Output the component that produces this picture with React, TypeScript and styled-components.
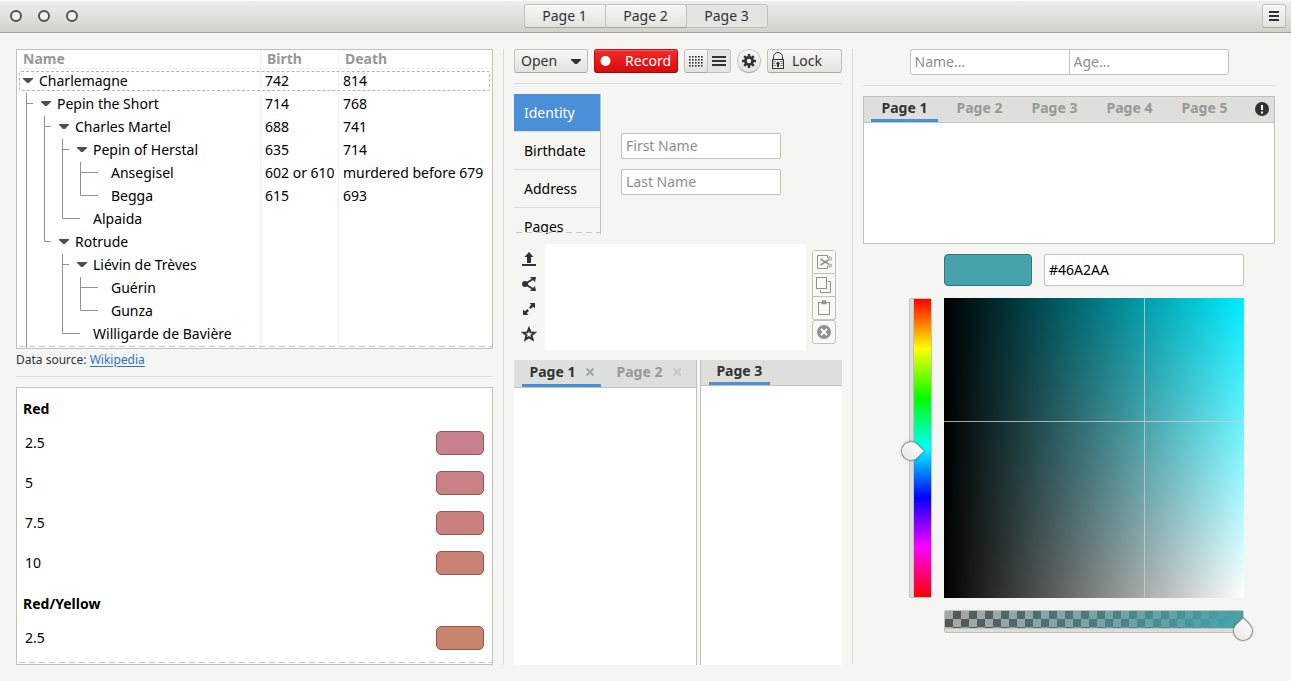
import React from 'react';
import styled, { createGlobalStyle, css } from 'styled-components';

const c = {
  bg: '#f5f5f3',
  base: '#ffffff',
  border: '#c2c2bd',
  line: '#dcdcda',
  text: '#000000',
  fg: '#2e3436',
  dim: '#959999',
  accent: '#4a90d9',
  tabbar: '#dededa',
};

const GlobalStyle = createGlobalStyle`
  *, *::before, *::after { box-sizing: border-box; }
  body {
    margin: 0;
    background: ${c.bg};
    color: ${c.text};
    font-family: "Noto Sans", "Open Sans", sans-serif;
    font-size: 14px;
    line-height: 20px;
  }
  button, input { font: inherit; color: inherit; margin: 0; }
  svg { display: block; flex: none; }
`;

const Window = styled.div`
  display: flex;
  flex-direction: column;
  min-height: 100vh;
`;

const HeaderBar = styled.header`
  display: grid;
  grid-template-columns: 1fr auto 1fr;
  align-items: center;
  height: 33px;
  padding: 0 5px 1px;
  border-bottom: 1px solid #a1a197;
  background: linear-gradient(#efefee, #d2d2cc);
  box-shadow: inset 0 1px #fbfbfb;
`;

const WindowControls = styled.div`
  display: flex;
  gap: 14px;
  padding-left: 4px;
`;

const WindowControl = styled.button`
  width: 14px;
  height: 14px;
  padding: 0;
  border: 0;
  background: none;
`;

const raised = css`
  border: 1px solid ${c.border};
  border-bottom-color: #a9a9a3;
  border-radius: 3px;
  background: linear-gradient(#f7f7f6, #e2e2df);
  color: ${c.fg};
  box-shadow: inset 0 1px #ffffff;
`;

const Linked = styled.div`
  display: flex;
  > * { border-radius: 0; }
  > * + * { margin-left: -1px; }
  > :first-child { border-radius: 3px 0 0 3px; }
  > :last-child { border-radius: 0 3px 3px 0; }
`;

const Button = styled.button<{ $pressed?: boolean }>`
  ${raised}
  display: flex;
  align-items: center;
  justify-content: center;
  height: 24px;
  padding: 0 6px;
  white-space: nowrap;
  ${p => p.$pressed && css`
    background: #e4e4e3;
    border-bottom-color: ${c.border};
    box-shadow: none;
  `}
`;

const SwitcherButton = styled(Button)`
  min-width: 82px;
`;

const IconButton = styled(Button)<{ $round?: boolean }>`
  width: 24px;
  padding: 0;
  ${p => p.$round && css`border-radius: 50%;`}
`;

const HeaderEnd = styled.div`
  display: flex;
  justify-content: flex-end;
`;

const Main = styled.main`
  flex: 1;
  display: grid;
  grid-template-columns: minmax(0, 477fr) 1px minmax(328px, 328fr) 1px minmax(370px, 412fr);
  gap: 10px;
  padding: 16px;
`;

const Column = styled.section`
  display: flex;
  flex-direction: column;
  gap: 10px;
  min-width: 0;
`;

const Divider = styled.div`
  background: ${c.line};
  min-height: 1px;
`;

const ScrollFrame = styled.div<{ $height?: number }>`
  position: relative;
  overflow: hidden;
  border: 1px solid ${c.border};
  background: ${c.base};
  ${p => (p.$height ? css`height: ${p.$height}px;` : css`flex: 1 1 0; min-height: 278px;`)}
`;

const Undershoot = styled.div`
  position: absolute;
  left: 2px;
  right: 0;
  bottom: 1px;
  height: 1px;
  background: repeating-linear-gradient(to right, #c6c6c3 0 6px, transparent 6px 10px);
`;

/* Family tree */

const Tree = styled.table`
  width: 100%;
  table-layout: fixed;
  border-collapse: separate;
  border-spacing: 0;
  th {
    height: 19px;
    padding: 0 6px;
    line-height: 18px;
    text-align: left;
    color: ${c.dim};
    border-bottom: 1px solid #f0f0ef;
  }
  td {
    height: 23px;
    padding: 0 4px;
    line-height: 23px;
    white-space: nowrap;
  }
  td:first-child { padding: 0 0 0 1px; }
  th:not(:last-child), td:not(:last-child) { border-right: 1px solid #f0f0ef; }
`;

const NarrowCol = styled.col<{ $width: number }>`
  width: ${p => p.$width}px;
`;

const NameCell = styled.div`
  display: flex;
  height: 23px;
`;

const Name = styled.span`
  padding-left: 3px;
`;

const FocusRing = styled.div`
  position: absolute;
  top: 21px;
  left: 2px;
  right: 2px;
  height: 20px;
  border: 1px dashed #b4b4b4;
  border-radius: 2px;
`;

type Guide = 'pass' | 'tee' | 'end' | 'blank';
type Person = { name: string; birth?: string; death?: string; guides: Guide[]; leaf?: boolean };

const people: Person[] = [
  { name: 'Charlemagne', birth: '742', death: '814', guides: [] },
  { name: 'Pepin the Short', birth: '714', death: '768', guides: ['tee'] },
  { name: 'Charles Martel', birth: '688', death: '741', guides: ['pass', 'tee'] },
  { name: 'Pepin of Herstal', birth: '635', death: '714', guides: ['pass', 'pass', 'tee'] },
  { name: 'Ansegisel', birth: '602 or 610', death: 'murdered before 679', guides: ['pass', 'pass', 'pass', 'tee'], leaf: true },
  { name: 'Begga', birth: '615', death: '693', guides: ['pass', 'pass', 'pass', 'end'], leaf: true },
  { name: 'Alpaida', guides: ['pass', 'pass', 'end'], leaf: true },
  { name: 'Rotrude', guides: ['pass', 'end'] },
  { name: 'Liévin de Trèves', guides: ['pass', 'blank', 'tee'] },
  { name: 'Guérin', guides: ['pass', 'blank', 'pass', 'tee'], leaf: true },
  { name: 'Gunza', guides: ['pass', 'blank', 'pass', 'end'], leaf: true },
  { name: 'Willigarde de Bavière', guides: ['pass', 'blank', 'end'], leaf: true },
  { name: '', guides: ['pass'], leaf: true },
];

const GuideSvg = styled.svg`
  overflow: visible;
`;

function GuideLine({ kind, leaf }: { kind: Guide; leaf?: boolean }) {
  const arm = leaf ? 26 : 15;
  const d: Record<Guide, string> = {
    pass: 'M8.5 0V23',
    tee: `M8.5 1V23M8.5 11.5H${arm}`,
    end: `M8.5 0V11.5H${arm}`,
    blank: '',
  };
  return (
    <GuideSvg width="18" height="23" aria-hidden="true">
      <path d={d[kind]} fill="none" stroke="#8f9292" />
    </GuideSvg>
  );
}

function Expander({ hidden }: { hidden?: boolean }) {
  return (
    <svg width="18" height="23" aria-hidden="true">
      {!hidden && <path d="M5 9H15V10L10.8 14H9.200L5 10Z" fill="#4c4f50" />}
    </svg>
  );
}

const Caption = styled.p`
  margin: -10px 0 -4px;
  font-size: 12px;
  line-height: 21px;
  color: ${c.fg};
`;

const Link = styled.a`
  color: #2a76c6;
  text-decoration: underline;
  text-underline-offset: 2px;
`;

/* Colour list */

const GroupTitle = styled.h2`
  margin: 0;
  padding: 11px 6px 4px;
  font-size: 14px;
  line-height: 20px;
`;

const SwatchRow = styled.div`
  display: flex;
  align-items: center;
  justify-content: space-between;
  height: 40px;
  padding: 0 8px;
`;

const Swatch = styled.button<{ $color: string; $edge: string; $large?: boolean }>`
  width: ${p => (p.$large ? 88 : 48)}px;
  height: ${p => (p.$large ? 32 : 24)}px;
  padding: 0;
  border: 1px solid ${p => p.$edge};
  border-radius: ${p => (p.$large ? 4 : 5)}px;
  background: ${p => p.$color};
`;

const reds = [
  ['2.5', '#c8818c', '#8a5961'],
  ['5', '#c98185', '#8b595c'],
  ['7.5', '#c9817f', '#8b5958'],
  ['10', '#c98174', '#8b5950'],
];

/* Toolbar */

const Toolbar = styled.div`
  display: flex;
  gap: 6px;
`;

const OpenButton = styled(Button)`
  width: 74px;
  justify-content: space-between;
`;

const RecordButton = styled(Button)`
  width: 84px;
  justify-content: space-between;
  padding: 0 6px 0 5px;
  border-color: #b50e0e;
  border-bottom-color: #940b0b;
  background: linear-gradient(#f32a2a, #d90b0b);
  box-shadow: inset 0 1px #f65f5f;
  color: #ffffff;
`;

const LockButton = styled(Button)`
  flex: 1;
  justify-content: flex-start;
  gap: 7px;
  padding: 0 3px;
`;

/* Stack with sidebar */

const Stack = styled.div`
  display: flex;
  height: 140px;
`;

const Sidebar = styled.nav`
  position: relative;
  width: 87px;
  overflow: hidden;
  border-right: 1px solid ${c.border};
`;

const SidebarItem = styled.button<{ $selected?: boolean }>`
  display: block;
  width: 100%;
  height: 38px;
  padding: 0 10px;
  border: 0;
  border-bottom: 1px solid ${c.line};
  background: ${p => (p.$selected ? c.accent : 'transparent')};
  background-clip: padding-box;
  color: ${p => (p.$selected ? '#ffffff' : c.text)};
  text-align: left;
`;

const StackPage = styled.div`
  display: flex;
  flex-direction: column;
  justify-content: center;
  gap: 10px;
  padding-left: 20px;
`;

const Entry = styled.input<{ $tall?: boolean }>`
  width: ${p => (p.$tall ? 200 : 160)}px;
  height: ${p => (p.$tall ? 32 : 26)}px;
  padding: 0 4px 2px;
  border: 1px solid ${c.border};
  border-radius: 2px;
  background: ${c.base};
  outline: 0;
  &::placeholder { color: #8b8e8f; opacity: 1; }
`;

const CenteredLinked = styled(Linked)`
  justify-content: center;
`;

const LinkedEntry = styled(Entry)`
  min-width: 0;
`;

/* Text area with side tools */

const Workbench = styled.div`
  display: flex;
  height: 106px;
`;

const PlainTools = styled.div`
  display: flex;
  flex-direction: column;
  justify-content: space-around;
  width: 31px;
  padding: 2px 1px 4px 0;
`;

const PlainTool = styled.button`
  display: flex;
  align-items: center;
  justify-content: center;
  height: 25px;
  padding: 0;
  border: 0;
  background: none;
  color: ${c.fg};
`;

const TextArea = styled.textarea`
  flex: 1;
  min-width: 0;
  border: 0;
  padding: 4px;
  resize: none;
  outline: 0;
  background: ${c.base};
`;

const EditTools = styled.div`
  display: flex;
  flex-direction: column;
  padding: 6px;
`;

const EditTool = styled.button<{ $first?: boolean; $last?: boolean; $joined?: boolean }>`
  display: flex;
  align-items: center;
  justify-content: center;
  width: 24px;
  height: ${p => (p.$joined ? 23 : 24)}px;
  padding: 0;
  border: 1px solid ${c.border};
  ${p => p.$joined && css`border-top: 0;`}
  border-radius: ${p => `${p.$first ? '3px 3px' : '0 0'} ${p.$last ? '3px 3px' : '0 0'}`};
  background: #f8f8f7;
`;

/* Notebooks */

const Paned = styled.div`
  flex: 1;
  display: flex;
  gap: 3px;
`;

const Pane = styled.div<{ $grow: number; $side: 'left' | 'right' }>`
  flex: ${p => p.$grow} 1 0;
  display: flex;
  flex-direction: column;
  min-width: 0;
  min-height: 120px;
  background: ${c.base};
  ${p => (p.$side === 'left' ? 'border-right' : 'border-left')}: 1px solid ${c.border};
`;

const Notebook = styled.div`
  height: 148px;
  border: 1px solid ${c.border};
  background: ${c.base};
`;

const TabBar = styled.div<{ $tall?: boolean }>`
  display: flex;
  height: ${p => (p.$tall ? 28 : 26)}px;
  padding: 0 7px;
  border-bottom: 1px solid ${c.border};
  background: ${c.tabbar};
`;

const PaneTabBar = styled(TabBar)`
  padding: 0 8px;
`;

const Tab = styled.div<{ $active?: boolean; $wide?: boolean }>`
  display: flex;
  align-items: center;
  gap: 8px;
  margin-right: 8px;
  padding: 0 ${p => (p.$wide ? 9 : 6)}px;
  border-bottom: 3px solid ${p => (p.$active ? c.accent : 'transparent')};
`;

const TabLabel = styled.button<{ $active?: boolean }>`
  min-width: 49px;
  padding: 0;
  border: 0;
  background: none;
  font-weight: 700;
  white-space: nowrap;
  color: ${p => (p.$active ? c.fg : c.dim)};
`;

const CloseButton = styled.button<{ $faint?: boolean }>`
  padding: 0;
  border: 0;
  background: none;
  color: ${p => (p.$faint ? '#c3c5c3' : '#a3a5a4')};
`;

const TabEnd = styled.div`
  display: flex;
  align-items: center;
  margin-left: auto;
  margin-right: -3px;
  padding-bottom: 1px;
`;

/* Colour editor */

const Editor = styled.div`
  align-self: center;
  display: grid;
  grid-template-columns: 23px 300px;
  gap: 12px;
  width: 350px;
  justify-content: end;
`;

const EditorTop = styled.div`
  grid-column: 2;
  display: flex;
  justify-content: space-between;
`;

const HueScale = styled.div`
  position: relative;
  border: 1px solid ${c.border};
  border-radius: 2px;
  background: ${c.line};
  padding-left: 3px;
  display: flex;
`;

const HueRamp = styled.div`
  flex: 1;
  border-left: 1px solid ${c.border};
  background: linear-gradient(#f00, #ff0, #0f0, #0ff, #00f, #f0f, #f00);
`;

const Plane = styled.div`
  position: relative;
  height: 300px;
  background:
    linear-gradient(to right, #000, transparent),
    linear-gradient(#00ebff, #fff);
`;

const CrossX = styled.div`
  position: absolute;
  left: 200px;
  top: 0;
  bottom: 0;
  width: 1px;
  background: rgba(205, 205, 205, 0.8);
`;

const CrossY = styled.div`
  position: absolute;
  top: 123px;
  left: 0;
  right: 0;
  height: 1px;
  background: rgba(205, 205, 205, 0.8);
`;

const AlphaScale = styled.div`
  position: relative;
  grid-column: 2;
  height: 23px;
  padding-bottom: 3px;
  border: 1px solid ${c.border};
  border-radius: 2px;
  background: ${c.line};
  display: flex;
`;

const AlphaRamp = styled.div`
  flex: 1;
  border-bottom: 1px solid ${c.border};
  background:
    linear-gradient(to right, transparent, #46a2aa),
    repeating-conic-gradient(#555 0 25%, #a8a8a8 0 50%) 0 0 / 16px 16px;
`;

const thumb = css`
  appearance: none;
  width: 20px;
  height: 20px;
  border: 1px solid #8f918d;
  background: linear-gradient(#fbfbfb, #e8e8e7);
  box-shadow: inset 0 0 0 1px #f8f8f8, 0 0 2px rgba(0, 0, 0, 0.3);
  transform: rotate(45deg);
`;

const range = css`
  appearance: none;
  position: absolute;
  padding: 0;
  background: none;
  outline: 0;
`;

const HueRange = styled.input`
  ${range}
  writing-mode: vertical-lr;
  left: -9px;
  top: -11px;
  width: 20px;
  height: 320px;
  &::-webkit-slider-thumb { ${thumb} border-radius: 50% 0 50% 50%; }
`;

const AlphaRange = styled.input`
  ${range}
  left: -12px;
  top: 10px;
  width: 320px;
  height: 20px;
  &::-webkit-slider-thumb { ${thumb} border-radius: 0 50% 50% 50%; }
`;

/* Icons */

const Svg = ({ size = 16, children }: { size?: number; children: React.ReactNode }) => (
  <svg width={size} height={size} viewBox={`0 0 ${size} ${size}`} aria-hidden="true" fill="currentColor">
    {children}
  </svg>
);

const MenuIcon = () => <Svg><path d="M3 3h10v2H3zM3 7h10v2H3zM3 11h10v2H3z" /></Svg>;
const ListIcon = () => <Svg><path d="M1 3h14v2H1zM1 7h14v2H1zM1 11h14v2H1z" /></Svg>;
const GridIcon = () => (
  <Svg>
    {[3, 6, 9, 12].map(y => [1, 4, 7, 10, 13].map(x => (
      <rect key={`${x}-${y}`} x={x} y={y} width="1.600" height="1.600" />
    )))}
  </Svg>
);
const ArrowDown = () => <Svg size={10}><path d="M0 3h10v1L6 8H4L0 4z" /></Svg>;
const Dot = () => <Svg size={11}><circle cx="5.500" cy="5" r="5" /></Svg>;
const GearIcon = () => (
  <Svg>
    <g stroke="currentColor" strokeWidth="2.400">
      <path d="M8 1v14M1 8h14M3.200 3.200l9.600 9.600M12.800 3.200L3.200 12.800" />
    </g>
    <circle cx="8" cy="8" r="5" />
    <circle cx="8" cy="8" r="2.200" fill="#f1f1f0" />
  </Svg>
);
const LockIcon = () => (
  <svg width="14" height="18" viewBox="0 0 14 18" aria-hidden="true" fill="none" stroke="#2e3436">
    <path d="M2.500 7V4.800a4 3.800 0 0 1 9 0V7" />
    <rect x="1.500" y="7.500" width="11" height="9" />
    <path d="M2 9.500h3M2 11.500h2M2 13.500h3M9 9.500h3M10 11.500h2M9 13.500h3" stroke="#8d9192" />
    <path d="M5 11.500L7 9.500l2 2L8 12.500V15H6v-2.500z" fill="#2e3436" stroke="none" />
  </svg>
);
const SendIcon = () => <Svg><path d="M1 13h14v2H1zM6 12V6H3.500L8 1l4.500 5H10v6z" /></Svg>;
const ShareIcon = () => (
  <Svg>
    <circle cx="4" cy="8" r="3" />
    <path d="M4 8l8-5M4 8l8 5" stroke="currentColor" strokeWidth="2" />
    <path d="M9 1h6l-1 5zM9 15h6l-1-5z" />
  </Svg>
);
const ExpandIcon = () => (
  <Svg>
    <path d="M8.500 2H14v5.500zM2 8.500V14h5.500z" />
    <path d="M12 4L8.800 7.200M4 12l3.200-3.200" stroke="currentColor" strokeWidth="2.500" />
  </Svg>
);
const StarIcon = () => (
  <Svg>
    <path
      d="M8 2.500l1.600 3.900 4.100.2-3.200 2.700 1.100 4.200L8 11.200l-3.600 2.300 1.100-4.200-3.200-2.700 4.100-.2z"
      fill="none" stroke="currentColor" strokeWidth="2"
    />
  </Svg>
);
const muted = { fill: 'none', stroke: '#8e9191' };
const CutIcon = () => (
  <Svg>
    <g {...muted}>
      <path d="M11.500 4V1.500h-10v13h10V12" />
      <path d="M4.500 5l8 5M4.500 11l8-5" strokeWidth="1.500" />
      <circle cx="14" cy="4.500" r="1.500" />
      <circle cx="14" cy="11.500" r="1.500" />
    </g>
  </Svg>
);
const CopyIcon = () => (
  <Svg>
    <g {...muted}>
      <rect x="0.500" y="0.500" width="10" height="11" />
      <path d="M12 4.500h2.500v11h-10V13" />
    </g>
  </Svg>
);
const PasteIcon = () => (
  <Svg>
    <g {...muted}>
      <rect x="2.500" y="2.500" width="11" height="12" />
      <path d="M5.500 3.500h5M6.500 3V1h3v2" strokeWidth="1.500" />
    </g>
  </Svg>
);
const DeleteIcon = () => (
  <Svg>
    <circle cx="8" cy="8" r="7" fill="#8e9191" />
    <path d="M5 5l6 6M11 5l-6 6" stroke="#fff" strokeWidth="2" />
  </Svg>
);
const CloseIcon = () => (
  <Svg size={10}><path d="M1.500 1.500l7 7M8.500 1.500l-7 7" stroke="currentColor" strokeWidth="2" /></Svg>
);
const AlertIcon = () => (
  <Svg>
    <circle cx="8" cy="8" r="7" fill="#2e3436" />
    <path d="M7 4h2v5H7zM7 10.500h2v2H7z" fill="#fff" />
  </Svg>
);

const PageTab = ({ label, active, wide, closable }: {
  label: string; active?: boolean; wide?: boolean; closable?: boolean;
}) => (
  <Tab $active={active} $wide={wide}>
    <TabLabel role="tab" aria-selected={!!active} $active={active}>{label}</TabLabel>
    {closable && <CloseButton $faint={!active} aria-label={`Close ${label}`}><CloseIcon /></CloseButton>}
  </Tab>
);

export default function App() {
  return (
    <Window>
      <GlobalStyle />
      <HeaderBar>
        <WindowControls>
          {['Close', 'Minimize', 'Maximize'].map(label => (
            <WindowControl key={label} aria-label={label}>
              <svg width="14" height="14" aria-hidden="true">
                <circle cx="7" cy="7" r="5" fill="#f4f4f3" stroke="#505354" strokeWidth="2" />
              </svg>
            </WindowControl>
          ))}
        </WindowControls>
        <Linked>
          <SwitcherButton>Page 1</SwitcherButton>
          <SwitcherButton>Page 2</SwitcherButton>
          <SwitcherButton $pressed>Page 3</SwitcherButton>
        </Linked>
        <HeaderEnd>
          <IconButton aria-label="Menu"><MenuIcon /></IconButton>
        </HeaderEnd>
      </HeaderBar>

      <Main>
        <Column>
          <ScrollFrame $height={300}>
            <Tree>
              <colgroup>
                <col />
                <NarrowCol $width={78} />
                <NarrowCol $width={153} />
              </colgroup>
              <thead>
                <tr><th>Name</th><th>Birth</th><th>Death</th></tr>
              </thead>
              <tbody>
                {people.map((p, i) => (
                  <tr key={i}>
                    <td>
                      <NameCell>
                        {p.guides.map((kind, k) => (
                          <GuideLine key={k} kind={kind} leaf={p.leaf} />
                        ))}
                        <Expander hidden={p.leaf} />
                        <Name>{p.name}</Name>
                      </NameCell>
                    </td>
                    <td>{p.birth}</td>
                    <td>{p.death}</td>
                  </tr>
                ))}
              </tbody>
            </Tree>
            <FocusRing />
            <Undershoot />
          </ScrollFrame>
          <Caption>Data source: <Link href="#wikipedia">Wikipedia</Link></Caption>
          <Divider />
          <ScrollFrame>
            <GroupTitle>Red</GroupTitle>
            {reds.map(([label, color, edge]) => (
              <SwatchRow key={label}>
                {label}
                <Swatch $color={color} $edge={edge} aria-label={`Red ${label}`} />
              </SwatchRow>
            ))}
            <GroupTitle>Red/Yellow</GroupTitle>
            <SwatchRow>
              2.5
              <Swatch $color="#c8846c" $edge="#8a5b4b" aria-label="Red/Yellow 2.5" />
            </SwatchRow>
            <Undershoot />
          </ScrollFrame>
        </Column>

        <Divider />

        <Column>
          <Toolbar>
            <OpenButton>Open<ArrowDown /></OpenButton>
            <RecordButton><Dot />Record</RecordButton>
            <Linked>
              <IconButton aria-label="Grid view"><GridIcon /></IconButton>
              <IconButton aria-label="List view" $pressed><ListIcon /></IconButton>
            </Linked>
            <IconButton $round aria-label="Settings"><GearIcon /></IconButton>
            <LockButton><LockIcon />Lock</LockButton>
          </Toolbar>
          <Divider />
          <Stack>
            <Sidebar>
              <SidebarItem $selected>Identity</SidebarItem>
              <SidebarItem>Birthdate</SidebarItem>
              <SidebarItem>Address</SidebarItem>
              <SidebarItem>Pages</SidebarItem>
              <Undershoot />
            </Sidebar>
            <StackPage>
              <Entry placeholder="First Name" aria-label="First Name" />
              <Entry placeholder="Last Name" aria-label="Last Name" />
            </StackPage>
          </Stack>
          <Workbench>
            <PlainTools>
              <PlainTool aria-label="Send"><SendIcon /></PlainTool>
              <PlainTool aria-label="Share"><ShareIcon /></PlainTool>
              <PlainTool aria-label="Expand"><ExpandIcon /></PlainTool>
              <PlainTool aria-label="Favorite"><StarIcon /></PlainTool>
            </PlainTools>
            <TextArea aria-label="Notes" />
            <EditTools>
              <EditTool $first aria-label="Cut"><CutIcon /></EditTool>
              <EditTool $joined aria-label="Copy"><CopyIcon /></EditTool>
              <EditTool $joined $last aria-label="Paste"><PasteIcon /></EditTool>
              <EditTool $first $last aria-label="Delete"><DeleteIcon /></EditTool>
            </EditTools>
          </Workbench>
          <Paned>
            <Pane $grow={183} $side="left">
              <PaneTabBar $tall role="tablist">
                <PageTab label="Page 1" active closable />
                <PageTab label="Page 2" closable />
              </PaneTabBar>
            </Pane>
            <Pane $grow={142} $side="right">
              <PaneTabBar role="tablist">
                <PageTab label="Page 3" active />
              </PaneTabBar>
            </Pane>
          </Paned>
        </Column>

        <Divider />

        <Column>
          <CenteredLinked>
            <LinkedEntry placeholder="Name…" aria-label="Name" />
            <LinkedEntry placeholder="Age…" aria-label="Age" />
          </CenteredLinked>
          <Divider />
          <Notebook>
            <TabBar role="tablist">
              {[1, 2, 3, 4, 5].map(n => (
                <PageTab key={n} label={`Page ${n}`} active={n === 1} wide />
              ))}
              <TabEnd><AlertIcon /></TabEnd>
            </TabBar>
          </Notebook>
          <Editor>
            <EditorTop>
              <Swatch $large $color="#46a2aa" $edge="#2f757b" aria-label="Current color" />
              <Entry $tall defaultValue="#46A2AA" aria-label="Color name" />
            </EditorTop>
            <HueScale>
              <HueRamp />
              <HueRange type="range" min="0" max="360" defaultValue="184" aria-label="Hue" />
            </HueScale>
            <Plane>
              <CrossX />
              <CrossY />
            </Plane>
            <AlphaScale>
              <AlphaRamp />
              <AlphaRange type="range" min="0" max="100" defaultValue="100" aria-label="Alpha" />
            </AlphaScale>
          </Editor>
        </Column>
      </Main>
    </Window>
  );
}
